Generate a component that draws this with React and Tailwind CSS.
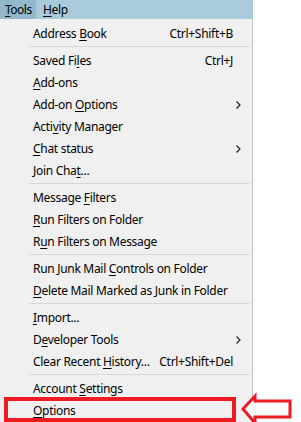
const items = [
  { label: "Address Book", key: 8, shortcut: "Ctrl+Shift+B" },
  "sep",
  { label: "Saved Files", key: 8, shortcut: "Ctrl+J" },
  { label: "Add-ons", key: 0 },
  { label: "Add-on Options", key: 7, sub: true },
  { label: "Activity Manager", key: 4 },
  { label: "Chat status", key: 0, sub: true },
  { label: "Join Chat...", key: 8 },
  "sep",
  { label: "Message Filters", key: 8 },
  { label: "Run Filters on Folder", key: 0 },
  { label: "Run Filters on Message", key: 1 },
  "sep",
  { label: "Run Junk Mail Controls on Folder", key: 14 },
  { label: "Delete Mail Marked as Junk in Folder", key: 0 },
  "sep",
  { label: "Import...", key: 0 },
  { label: "Developer Tools", key: 1, sub: true },
  { label: "Clear Recent History...", key: 13, shortcut: "Ctrl+Shift+Del" },
  "sep",
  { label: "Account Settings", key: 8 },
  { label: "Options", key: 0 },
];

function AccessLabel({ text, index }) {
  return (
    <span>
      {text.slice(0, index)}
      <span className="underline underline-offset-2">{text[index]}</span>
      {text.slice(index + 1)}
    </span>
  );
}

function Chevron() {
  return (
    <svg width="5" height="8" viewBox="0 0 5 8" className="ml-auto mr-[11px]">
      <path d="M0.5 0.5 L4 4 L0.5 7.5" fill="none" stroke="#222" strokeWidth="1.2" />
    </svg>
  );
}

export default function App() {
  return (
    <div className="relative w-[301px] h-[422px] overflow-hidden bg-white font-['Noto_Sans',sans-serif] text-[12px] tracking-[-0.3px] text-black">
      {/* menu bar */}
      <div className="flex h-[19px] w-[253px] items-center bg-[#a9cbdb]">
        <div className="flex h-full w-[36px] items-center bg-[#93b8cb] pl-[5px] tracking-[-0.5px]">
          <AccessLabel text="Tools" index={0} />
        </div>
        <div className="pl-[7px]">
          <AccessLabel text="Help" index={0} />
        </div>
      </div>

      {/* dropdown */}
      <div className="w-[253px] border-r border-[#c4c4c4] bg-[#f0f0f0] pt-[3px] pb-[4px]">
        {items.map((item, i) =>
          item === "sep" ? (
            <div key={i} className="flex h-[5px] items-center pl-[29px] pr-[2px]">
              <div className="h-px w-full bg-[#d7d7d7]" />
            </div>
          ) : (
            <div key={i} className="flex h-[22px] items-center pl-[33px] pt-px whitespace-nowrap">
              <AccessLabel text={item.label} index={item.key} />
              {item.shortcut && (
                <span className="ml-auto mr-[19px] pl-2">{item.shortcut}</span>
              )}
              {item.sub && <Chevron />}
            </div>
          )
        )}
      </div>

      {/* annotation */}
      <div className="absolute left-[4px] top-[397px] h-[25px] w-[232px] border-[4px] border-[#ed1c24]" />
      <svg
        className="absolute left-[238px] top-[390px]"
        width="58"
        height="36"
        viewBox="238 390 58 36"
      >
        <polygon
          points="243,409 255,396 255,401 290,401 290,417 255,417 255,423"
          fill="white"
          stroke="#ed1c24"
          strokeWidth="3"
          strokeLinejoin="miter"
        />
      </svg>
    </div>
  );
}
